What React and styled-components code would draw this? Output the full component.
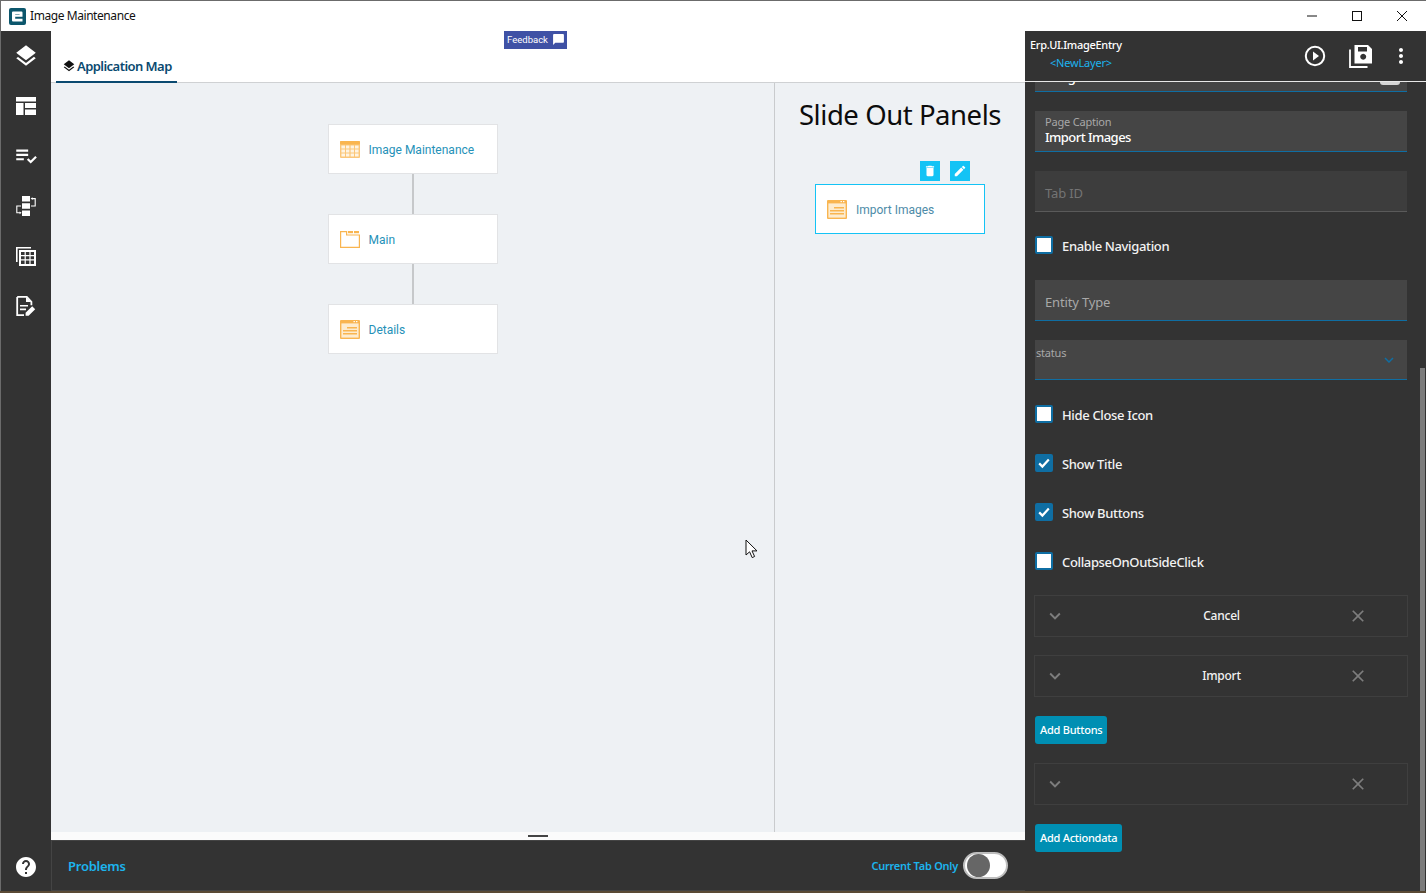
import React from 'react'
import styled, { createGlobalStyle } from 'styled-components'
import {
  MdLayers,
  MdPlaylistAddCheck,
  MdMoreVert,
  MdHelp,
  MdDelete,
  MdEdit,
  MdChatBubble,
  MdKeyboardArrowDown,
  MdClose,
} from 'react-icons/md'

const GlobalStyle = createGlobalStyle`
  html, body {
    margin: 0;
    padding: 0;
    background: #5a4a35;
    overflow: hidden;
  }
  * {
    box-sizing: border-box;
  }
`

const Win = styled.div`
  width: 1426px;
  height: 891px;
  display: flex;
  flex-direction: column;
  font-family: 'Noto Sans', 'Open Sans', sans-serif;
  background: #333;
  border-top: 1px solid #6b6b6b;
  border-left: 1px solid #6b6b6b;
`

const TitleBar = styled.header`
  height: 30px;
  flex: none;
  display: flex;
  align-items: center;
  background: #fff;
  padding: 0 2px 0 8px;
`

const Logo = styled.svg`
  width: 17px;
  height: 17px;
  margin-right: 4px;
`

const WinTitle = styled.span`
  font-family: 'Noto Sans', sans-serif;
  font-size: 12px;
  line-height: 14px;
  padding-bottom: 1px;
  letter-spacing: -0.43px;
  color: #111;
  flex: 1;
`

const WinBtn = styled.span`
  width: 45px;
  height: 30px;
  display: flex;
  align-items: center;
  justify-content: center;
  svg {
    width: 12px;
    height: 12px;
  }
`

const Body = styled.div`
  flex: 1;
  display: flex;
  min-height: 0;
`

const Rail = styled.nav`
  width: 50px;
  flex: none;
  display: flex;
  flex-direction: column;
  background: #333;
`

const RailBtn = styled.div`
  height: 50px;
  display: flex;
  align-items: center;
  justify-content: center;
  color: #fff;
  svg {
    width: ${(p) => p.$size || 24}px;
    height: ${(p) => p.$size || 24}px;
    fill: currentColor;
  }
`

const RailSpacer = styled.div`
  flex: 1;
`

const HelpBtn = styled(RailBtn)`
  height: 48px;
`

const Main = styled.main`
  width: 974px;
  flex: none;
  display: flex;
  flex-direction: column;
`

const TabBar = styled.div`
  position: relative;
  height: 52px;
  flex: none;
  display: flex;
  align-items: flex-end;
  background: #fff;
  border-bottom: 1px solid #cfd1d3;
  padding-left: 5px;
`

const Feedback = styled.div`
  position: absolute;
  left: 453px;
  top: 0;
  width: 63px;
  height: 18px;
  display: flex;
  align-items: center;
  justify-content: center;
  gap: 4px;
  padding: 0 0 1px 1px;
  background: #3f51a5;
  color: #fff;
  font-family: 'Roboto', sans-serif;
  font-size: 9.5px;
  svg {
    width: 13px;
    height: 13px;
  }
`

const Tab = styled.div`
  width: 121px;
  height: 30px;
  display: flex;
  align-items: center;
  gap: 1px;
  padding: 0 0 2px 6px;
  margin-bottom: -1px;
  border-bottom: 2px solid #0a4a70;
  color: #0a4a70;
  font-size: 13px;
  font-weight: 600;
  letter-spacing: -0.55px;
  white-space: nowrap;
  svg {
    width: 14px;
    height: 14px;
    color: #111;
  }
`

const Canvas = styled.div`
  flex: 1;
  display: flex;
  min-height: 0;
  background: #eef1f4;
`

const MapArea = styled.section`
  width: 723px;
  flex: none;
  display: flex;
  flex-direction: column;
  align-items: center;
  padding-top: 41px;
`

const SlideArea = styled.section`
  flex: 1;
  border-left: 1px solid #c9cbcd;
  display: flex;
  flex-direction: column;
  align-items: center;
`

const SlideTitle = styled.h1`
  margin: 12px 0 0;
  height: 40px;
  font-size: 27.5px;
  line-height: 40px;
  font-weight: 400;
  color: #0c0c0c;
  white-space: nowrap;
  letter-spacing: -0.45px;
`

const NodeTools = styled.div`
  width: 170px;
  display: flex;
  justify-content: flex-end;
  gap: 10px;
  padding-right: 15px;
  margin-top: 26px;
  margin-bottom: 3px;
`

const ToolBtn = styled.span`
  width: 20px;
  height: 20px;
  display: flex;
  align-items: center;
  justify-content: center;
  background: #14c3f5;
  color: #fff;
  svg {
    width: 14px;
    height: 14px;
  }
`

const Node = styled.div`
  width: 170px;
  height: 50px;
  flex: none;
  display: flex;
  align-items: center;
  gap: 9px;
  padding: 1px 0 0 11px;
  background: #fff;
  border: 1px solid ${(p) => (p.$selected ? '#14c3f5' : '#e2e3e5')};
  font-family: 'Roboto', sans-serif;
  font-size: 12px;
  color: ${(p) => (p.$selected ? '#4d8ba8' : '#2591b8')};
  svg {
    width: 20px;
    height: auto;
    flex: none;
  }
`

const Connector = styled.div`
  width: 2px;
  height: 40px;
  background: #c6c8ca;
`

const Splitter = styled.div`
  height: 8px;
  flex: none;
  display: flex;
  justify-content: center;
  padding-top: 3px;
  background: #fbfbfb;
  &::before {
    content: '';
    width: 20px;
    height: 2px;
    background: #444;
  }
`

const BottomBar = styled.footer`
  height: 51px;
  flex: none;
  display: flex;
  align-items: center;
  justify-content: space-between;
  padding: 0 17px 0 16px;
  background: #333;
  border: 1px solid #444;
  border-right: none;
`

const Problems = styled.span`
  color: #1cb4ee;
  font-size: 13px;
  font-weight: 600;
  letter-spacing: -0.25px;
`

const ToggleWrap = styled.div`
  display: flex;
  align-items: center;
  gap: 5px;
  color: #1cb4ee;
  font-size: 11px;
  font-weight: 600;
  letter-spacing: -0.25px;
`

const Toggle = styled.span`
  width: 45px;
  height: 27px;
  display: flex;
  align-items: center;
  padding-left: 2px;
  border-radius: 14px;
  background: #fff;
  border: 2px solid #bdbdbd;
  &::before {
    content: '';
    width: 23px;
    height: 23px;
    border-radius: 50%;
    background: #666;
  }
`

const Panel = styled.aside`
  flex: 1;
  min-width: 0;
  display: flex;
  flex-direction: column;
  background: #333;
`

const PanelHead = styled.div`
  height: 51px;
  flex: none;
  display: flex;
  align-items: center;
  border-bottom: 1px solid #e8e8e8;
  padding: 0 7px 0 5px;
`

const PanelName = styled.div`
  flex: 1;
  display: flex;
  flex-direction: column;
  gap: 3px;
  margin-top: -6px;
`

const AppName = styled.span`
  color: #fff;
  font-size: 11px;
  font-weight: 500;
  letter-spacing: -0.3px;
`

const LayerName = styled.span`
  color: #1cb4ee;
  font-size: 11px;
  padding-left: 20px;
  letter-spacing: -0.2px;
`

const HeadBtn = styled.span`
  display: flex;
  align-items: center;
  justify-content: center;
  width: ${(p) => p.$w}px;
  color: #fff;
  svg {
    width: 24px;
    height: 24px;
  }
`

const PanelBody = styled.div`
  position: relative;
  flex: 1;
  min-height: 0;
  overflow: hidden;
  padding: 0 19px 0 10px;
`

const Scrollbar = styled.div`
  position: absolute;
  top: 286px;
  right: 1px;
  bottom: -2px;
  width: 5px;
  background: #7c7c7c;
`

const Field = styled.div`
  height: ${(p) => p.$h || 41}px;
  margin-top: ${(p) => p.$mt ?? 19}px;
  position: relative;
  display: flex;
  flex-direction: column;
  justify-content: center;
  padding-left: 10px;
  background: ${(p) => (p.$dim ? '#3d3d3d' : '#454545')};
  border-bottom: 1px solid ${(p) => (p.$dim ? '#5a5a5a' : '#0f6ea3')};
  font-size: 13px;
  letter-spacing: -0.55px;
  font-weight: 500;
  color: #fff;
`

const CaptionField = styled(Field)`
  padding-bottom: 3px;
`

const ClippedField = styled(Field)`
  justify-content: flex-end;
  padding-bottom: 6px;
`

const Pill = styled.span`
  position: absolute;
  right: 7px;
  bottom: 6px;
  width: 20px;
  height: 8px;
  border-radius: 3px;
  background: #d5d5d5;
`

const FieldLabel = styled.span`
  font-size: 11px;
  line-height: 13px;
  margin-bottom: 1px;
  font-weight: 400;
  color: #a8a8a8;
  letter-spacing: -0.2px;
`

const FieldValue = styled.span`
  line-height: 16px;
`

const Placeholder = styled.span`
  margin-top: 4px;
  font-weight: 400;
  letter-spacing: -0.15px;
  color: ${(p) => (p.$dim ? '#747474' : '#a8a8a8')};
`

const SelectLabel = styled(FieldLabel)`
  position: absolute;
  left: 1px;
  top: 6px;
`

const SelectArrow = styled.span`
  position: absolute;
  right: 9px;
  top: 11px;
  display: flex;
  color: #0f6ea3;
  svg {
    width: 18px;
    height: 18px;
  }
`

const CheckRow = styled.label`
  display: flex;
  align-items: center;
  gap: 9px;
  height: 18px;
  margin-top: ${(p) => p.$mt ?? 31}px;
  color: #f2f2f2;
  font-size: 13px;
  font-weight: 500;
  letter-spacing: -0.35px;
`

const CheckText = styled.span`
  padding-top: 2px;
`

const Box = styled.span`
  width: 18px;
  height: 18px;
  flex: none;
  display: flex;
  align-items: center;
  justify-content: center;
  border-radius: 2px;
  border: 2px solid #0f6ea3;
  background: ${(p) => (p.$on ? '#0f6ea3' : '#fff')};
  svg {
    width: 14px;
    height: 14px;
  }
`

const Row = styled.div`
  height: 42px;
  margin: ${(p) => p.$mt ?? 18}px -1px 0;
  display: flex;
  align-items: center;
  border: 1px solid #3f3f3f;
  color: #f2f2f2;
  font-size: 12px;
  font-weight: 500;
  letter-spacing: -0.25px;
`

const RowIcon = styled.span`
  width: ${(p) => p.$w}px;
  flex: none;
  display: flex;
  justify-content: center;
  color: #7d7d7d;
  svg {
    width: ${(p) => p.$size}px;
    height: ${(p) => p.$size}px;
  }
`

const RowTitle = styled.span`
  flex: 1;
  text-align: center;
  padding: 0 0 1px 59px;
`

const AddBtn = styled.button`
  display: block;
  height: 28px;
  margin-top: ${(p) => p.$mt ?? 19}px;
  padding: 0 5px 2px;
  border: none;
  border-radius: 3px;
  background: #008fb3;
  color: #fff;
  font-family: inherit;
  font-size: 11px;
  font-weight: 500;
  letter-spacing: -0.25px;
`

const Cursor = styled.svg`
  position: absolute;
  left: 745px;
  top: 539px;
  width: 14px;
  height: 20px;
`

const orange = '#f9b550'

function GridIcon() {
  return (
    <svg viewBox="0 0 20 17">
      <rect x="0" y="0" width="20" height="17" fill="#fbc679" rx="1" />
      <rect x="0" y="0" width="20" height="3.4" fill={orange} rx="1" />
      <path
        d="M1.4 4.6h3.6v2.8H1.4zM6 4.6h3.4v2.8H6zM10.6 4.6H14v2.8h-3.4zM15 4.6h3.6v2.8H15zM1.4 8.6h3.6v2.8H1.4zM6 8.6h3.4v2.8H6zM10.6 8.6H14v2.8h-3.4zM15 8.6h3.6v2.8H15zM1.4 12.6h3.6v3H1.4zM6 12.6h3.4v3H6zM10.6 12.6H14v3h-3.4zM15 12.6h3.6v3H15z"
        fill="#fef3e2"
      />
    </svg>
  )
}

function FolderIcon() {
  return (
    <svg viewBox="0 0 20 17">
      <path d="M.6 16.4V.6h6v3.4h12.8v12.4z" fill="none" stroke={orange} strokeWidth="1.2" />
      <rect x="8" y="0" width="5" height="2.2" fill={orange} />
      <rect x="14" y="0" width="5" height="2.2" fill={orange} />
    </svg>
  )
}

function PageIcon() {
  return (
    <svg viewBox="0 0 20 19">
      <rect x="0" y="0" width="20" height="19" rx="1" fill={orange} />
      <rect x="1.4" y="3.4" width="17.2" height="14.2" fill="#fdeccf" />
      <rect x="13.5" y="1" width="1.4" height="1.2" fill="#fff" />
      <rect x="16" y="1" width="1.4" height="1.2" fill="#fff" />
      <rect x="7" y="7" width="10" height="1.5" fill={orange} />
      <rect x="3" y="10" width="14" height="1.5" fill={orange} />
      <rect x="3" y="13" width="14" height="1.5" fill={orange} />
    </svg>
  )
}

function QuiltIcon() {
  return (
    <svg viewBox="0 0 20 18">
      <path d="M0 0h20v4.5H0zM0 6h7.5v12H0zM9 6h11v5H9zM9 12.6h11V18H9z" />
    </svg>
  )
}

function FlowIcon() {
  return (
    <svg viewBox="0 0 20 20">
      <path d="M6 0h8v5.6H6zM6 7.2h8v5.6H6zM6 14.4h8V20H6z" />
      <path
        d="M16 2.6h3.2v7.4H15M5 10H.8v6.8H4"
        fill="none"
        stroke="currentColor"
        strokeWidth="1.1"
      />
      <path d="M14.6 2.6l2-1.4v2.8zM5.6 16.8l-2-1.4v2.8z" />
    </svg>
  )
}

function TableStackIcon() {
  return (
    <svg viewBox="0 0 20 20">
      <path d="M0 1.4h1.6v14.6H0zM0 1h15v1.5H0z" />
      <path
        fillRule="evenodd"
        d="M3 4h17v16H3zM5 6v3h3.6V6zM9.8 6v3h3.6V6zM14.6 6v3h3.4V6zM5 10.2v3h3.6v-3zM9.8 10.2v3h3.6v-3zM14.6 10.2v3h3.4v-3zM5 14.4V18h3.6v-3.6zM9.8 14.4V18h3.6v-3.6zM14.6 14.4V18h3.4v-3.6z"
      />
    </svg>
  )
}

function DocEditIcon() {
  return (
    <svg viewBox="0 0 20 20">
      <path
        d="M1.2.9h9.6l4.6 4.9v3.4M8 19.1H1.2V.9"
        fill="none"
        stroke="currentColor"
        strokeWidth="1.8"
      />
      <path d="M10 1l5 5h-5zM4 9h8v1.6H4zM4 12.6h6v1.6H4zM9.6 19.8v-3l6.6-6.6 3 3-6.6 6.6z" />
    </svg>
  )
}

function PlayCircleIcon() {
  return (
    <svg viewBox="0 0 24 24">
      <circle cx="12" cy="12" r="9.2" fill="none" stroke="currentColor" strokeWidth="2" />
      <path d="M10 7.6l6 4.4-6 4.4z" fill="currentColor" />
    </svg>
  )
}

function SaveStackIcon() {
  return (
    <svg viewBox="0 0 24 24">
      <path
        fill="currentColor"
        fillRule="evenodd"
        d="M5.5 1H19l4 4v14.5H5.5zM9 3v4.6h9V3zM14.2 9.8a3 3 0 1 0 .01 0z"
      />
      <path d="M1 5.5v17.5h17.5" fill="none" stroke="currentColor" strokeWidth="1.8" />
    </svg>
  )
}

function TickIcon() {
  return (
    <svg viewBox="0 0 14 14">
      <path d="M2.2 7.4l3.2 3.2 6.4-7" fill="none" stroke="#fff" strokeWidth="2.2" />
    </svg>
  )
}

function Check({ on, label, mt }) {
  return (
    <CheckRow $mt={mt}>
      <Box $on={on}>{on && <TickIcon />}</Box>
      <CheckText>{label}</CheckText>
    </CheckRow>
  )
}

function ButtonRow({ title, mt }) {
  return (
    <Row $mt={mt}>
      <RowIcon $w={40} $size={22}>
        <MdKeyboardArrowDown />
      </RowIcon>
      <RowTitle>{title}</RowTitle>
      <RowIcon $w={98} $size={20}>
        <MdClose />
      </RowIcon>
    </Row>
  )
}

export default function App() {
  return (
    <>
      <GlobalStyle />
      <Win>
        <TitleBar>
          <Logo viewBox="0 0 17 17">
            <rect width="17" height="17" rx="2" fill="#0c566c" />
            <path
              d="M4 3.5h8.5a1 1 0 0 1 1 1v4.2H6.2v2.1h7.3v2.7H4a1 1 0 0 1-1-1v-8a1 1 0 0 1 1-1zM6.2 5.9v.6h4.4v-.6z"
              fill="#fff"
              fillRule="evenodd"
            />
          </Logo>
          <WinTitle>Image Maintenance</WinTitle>
          <WinBtn>
            <svg viewBox="0 0 12 12">
              <path d="M1 6h10" stroke="#111" strokeWidth="1" />
            </svg>
          </WinBtn>
          <WinBtn>
            <svg viewBox="0 0 12 12">
              <rect x="1.5" y="1.5" width="9" height="9" fill="none" stroke="#111" />
            </svg>
          </WinBtn>
          <WinBtn>
            <svg viewBox="0 0 12 12">
              <path d="M1 1l10 10M11 1L1 11" stroke="#111" strokeWidth="1" />
            </svg>
          </WinBtn>
        </TitleBar>
        <Body>
          <Rail>
            <RailBtn $size={26}>
              <MdLayers />
            </RailBtn>
            <RailBtn $size={20}>
              <QuiltIcon />
            </RailBtn>
            <RailBtn $size={26}>
              <MdPlaylistAddCheck />
            </RailBtn>
            <RailBtn $size={20}>
              <FlowIcon />
            </RailBtn>
            <RailBtn $size={20}>
              <TableStackIcon />
            </RailBtn>
            <RailBtn $size={20}>
              <DocEditIcon />
            </RailBtn>
            <RailSpacer />
            <HelpBtn $size={24}>
              <MdHelp />
            </HelpBtn>
          </Rail>
          <Main>
            <TabBar>
              <Feedback>
                Feedback
                <MdChatBubble />
              </Feedback>
              <Tab>
                <MdLayers />
                Application Map
              </Tab>
            </TabBar>
            <Canvas>
              <MapArea>
                <Node>
                  <GridIcon />
                  Image Maintenance
                </Node>
                <Connector />
                <Node>
                  <FolderIcon />
                  Main
                </Node>
                <Connector />
                <Node>
                  <PageIcon />
                  Details
                </Node>
              </MapArea>
              <SlideArea>
                <SlideTitle>Slide Out Panels</SlideTitle>
                <NodeTools>
                  <ToolBtn>
                    <MdDelete />
                  </ToolBtn>
                  <ToolBtn>
                    <MdEdit />
                  </ToolBtn>
                </NodeTools>
                <Node $selected>
                  <PageIcon />
                  Import Images
                </Node>
              </SlideArea>
            </Canvas>
            <Splitter />
            <BottomBar>
              <Problems>Problems</Problems>
              <ToggleWrap>
                Current Tab Only
                <Toggle />
              </ToggleWrap>
            </BottomBar>
          </Main>
          <Panel>
            <PanelHead>
              <PanelName>
                <AppName>Erp.UI.ImageEntry</AppName>
                <LayerName>&lt;NewLayer&gt;</LayerName>
              </PanelName>
              <HeadBtn $w={47}>
                <PlayCircleIcon />
              </HeadBtn>
              <HeadBtn $w={45}>
                <SaveStackIcon />
              </HeadBtn>
              <HeadBtn $w={36}>
                <MdMoreVert />
              </HeadBtn>
            </PanelHead>
            <PanelBody>
              <ClippedField $mt={-31}>
                <FieldValue>Images</FieldValue>
                <Pill />
              </ClippedField>
              <CaptionField>
                <FieldLabel>Page Caption</FieldLabel>
                <FieldValue>Import Images</FieldValue>
              </CaptionField>
              <Field $dim>
                <Placeholder $dim>Tab ID</Placeholder>
              </Field>
              <Check label="Enable Navigation" mt={24} />
              <Field $mt={26}>
                <Placeholder>Entity Type</Placeholder>
              </Field>
              <Field $h={40}>
                <SelectLabel>status</SelectLabel>
                <SelectArrow>
                  <MdKeyboardArrowDown />
                </SelectArrow>
              </Field>
              <Check label="Hide Close Icon" mt={25} />
              <Check on label="Show Title" />
              <Check on label="Show Buttons" />
              <Check label="CollapseOnOutSideClick" />
              <ButtonRow title="Cancel" mt={25} />
              <ButtonRow title="Import" />
              <AddBtn>Add Buttons</AddBtn>
              <ButtonRow title="" mt={19} />
              <AddBtn>Add Actiondata</AddBtn>
              <Scrollbar />
            </PanelBody>
          </Panel>
        </Body>
        <Cursor viewBox="0 0 14 20">
          <path
            d="M1 1v15l3.6-3.2 2.6 5.8 2.4-1.1-2.6-5.6H12z"
            fill="#fff"
            stroke="#111"
            strokeWidth="1"
          />
        </Cursor>
      </Win>
    </>
  )
}
